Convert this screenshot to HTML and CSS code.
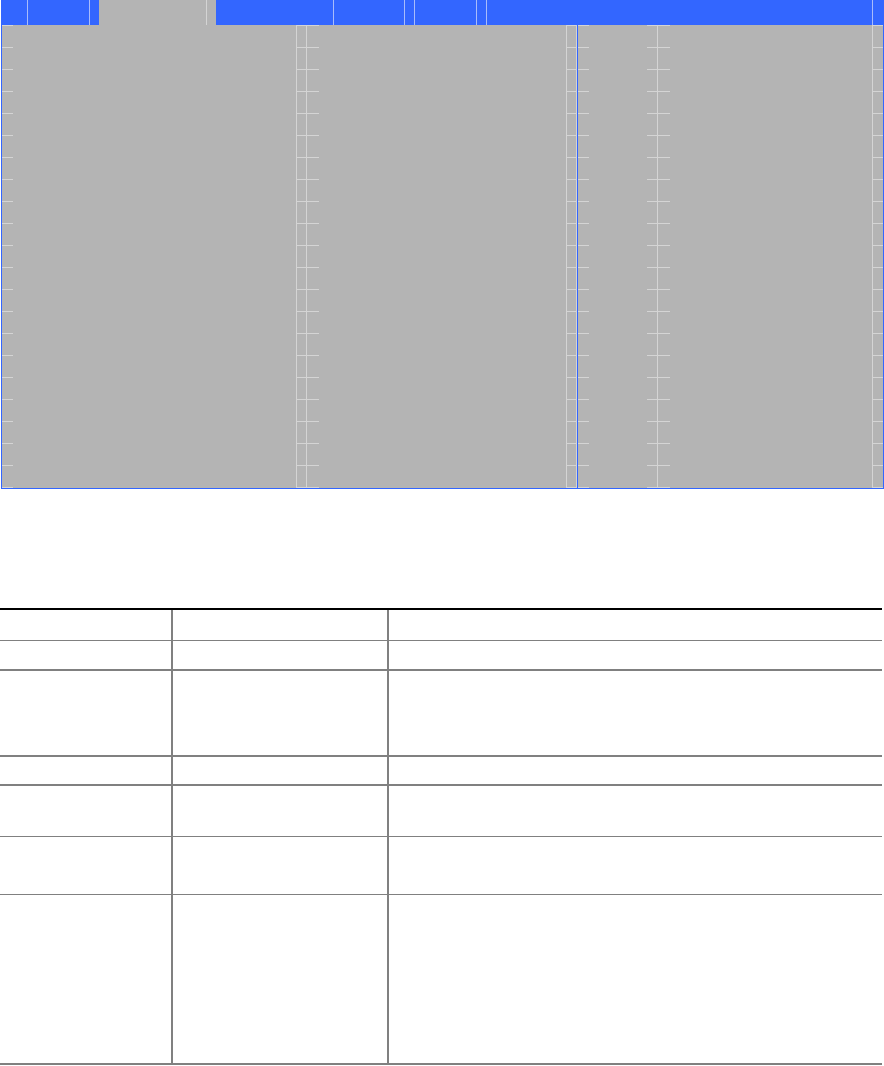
FILE: index.html
```html
<!DOCTYPE html>
<html lang="en">

<head>
    <meta charset="UTF-8">
    <meta name="viewport" content="width=device-width, initial-scale=1.0">
    <title>Setup Screen</title>
    <link rel="stylesheet" href="styles.css">
</head>

<body>

    <div class="screen">
        <div class="menu-bar">
            <div class="tab w26 line"></div>
            <div class="tab w62 line"></div>
            <div class="tab w9"></div>
            <div class="tab tab-active"></div>
            <div class="tab w118 line"></div>
            <div class="tab w71 line"></div>
            <div class="tab w10 line"></div>
            <div class="tab w62 line"></div>
            <div class="tab w10 line"></div>
            <div class="tab w386 line"></div>
            <div class="tab rest"></div>
        </div>

        <div class="screen-body">
            <div class="pane pane-left"></div>
            <div class="sep sep-double"></div>
            <div class="pane pane-mid"></div>
            <div class="sep sep-split"></div>
            <div class="pane pane-small"></div>
            <div class="sep sep-center"></div>
            <div class="pane pane-help"></div>
            <div class="sep sep-edge"></div>
        </div>
    </div>

    <div class="table">
        <div class="row h31 thin"><div class="cell"></div><div class="cell"></div><div class="cell"></div></div>
        <div class="row h30"><div class="cell"></div><div class="cell"></div><div class="cell"></div></div>
        <div class="row h86"><div class="cell"></div><div class="cell"></div><div class="cell"></div></div>
        <div class="row h29"><div class="cell"></div><div class="cell"></div><div class="cell"></div></div>
        <div class="row h51 thin"><div class="cell"></div><div class="cell"></div><div class="cell"></div></div>
        <div class="row h58 thin"><div class="cell"></div><div class="cell"></div><div class="cell"></div></div>
        <div class="row h170"><div class="cell"></div><div class="cell"></div><div class="cell"></div></div>
    </div>

</body>

</html>
```

FILE: styles.css
```css
body {
    margin: 0;
    padding: 0;
    background-color: #fff;
    font-family: 'Liberation Sans', Arial, sans-serif;
}

/* setup screen frame */
.screen {
    box-sizing: border-box;
    width: 883px;
    margin-left: 1px;
    border-left: 1px solid #3366ff;
    border-right: 1px solid #3366ff;
    border-bottom: 1px solid #3366ff;
}

.menu-bar {
    display: flex;
    height: 25px;
    background-color: #3366ff;
}

.tab {
    box-sizing: border-box;
    height: 25px;
    flex: none;
}

.tab.line {
    border-right: 1px solid #a9bcfb;
}

.w9 { width: 9px; }
.w10 { width: 10px; }
.w26 { width: 26px; }
.w62 { width: 62px; }
.w71 { width: 71px; }
.w118 { width: 118px; }
.w386 { width: 386px; }

.tab.rest {
    flex: 1;
}

.tab-active {
    width: 117px;
    background:
        linear-gradient(#d4d4d4, #d4d4d4) 107px 0 / 1px 100% no-repeat,
        #b4b4b4;
}

.screen-body {
    display: flex;
    height: 463px;
    background-color: #b4b4b4;
}

.pane {
    flex: none;
}

.pane-left {
    width: 294px;
    background: repeating-linear-gradient(to bottom, #d4d4d4 0 1px, transparent 1px 22px) 0 0 / 11px 100% no-repeat;
}

.pane-mid { width: 247px; }
.pane-small { width: 58px; }
.pane-help { width: 202px; }

.sep {
    flex: none;
    width: 23px;
}

.sep-double {
    background:
        linear-gradient(#d4d4d4, #d4d4d4) 0 0 / 1px 100% no-repeat,
        linear-gradient(#d4d4d4, #d4d4d4) 10px 0 / 1px 100% no-repeat,
        repeating-linear-gradient(to bottom, #d4d4d4 0 1px, transparent 1px 22px);
}

.sep-split {
    background:
        linear-gradient(#3366ff, #3366ff) 11px 0 / 1px 100% no-repeat,
        linear-gradient(#d4d4d4, #d4d4d4) 0 0 / 1px 100% no-repeat,
        linear-gradient(#d4d4d4, #d4d4d4) 10px 0 / 1px 100% no-repeat,
        repeating-linear-gradient(to bottom, #d4d4d4 0 1px, transparent 1px 22px);
}

.sep-center {
    background:
        linear-gradient(#d4d4d4, #d4d4d4) 10px 0 / 1px 100% no-repeat,
        repeating-linear-gradient(to bottom, #d4d4d4 0 1px, transparent 1px 22px);
}

.sep-edge {
    width: 11px;
    background:
        linear-gradient(#d4d4d4, #d4d4d4) 0 0 / 1px 100% no-repeat,
        repeating-linear-gradient(to bottom, #d4d4d4 0 1px, transparent 1px 22px);
}

/* description table */
.table {
    width: 882px;
    margin-top: 119px;
    border-top: 2px solid #000;
}

.row {
    box-sizing: border-box;
    display: grid;
    grid-template-columns: 173px 216px 1fr;
    border-bottom: 2px solid #808080;
}

.row.thin {
    border-bottom-width: 1px;
}

.cell {
    box-sizing: border-box;
}

.cell:nth-child(1),
.cell:nth-child(2) {
    border-right: 2px solid #808080;
}

.h29 { height: 29px; }
.h30 { height: 30px; }
.h31 { height: 31px; }
.h51 { height: 51px; }
.h58 { height: 58px; }
.h86 { height: 86px; }
.h170 { height: 170px; }
```
